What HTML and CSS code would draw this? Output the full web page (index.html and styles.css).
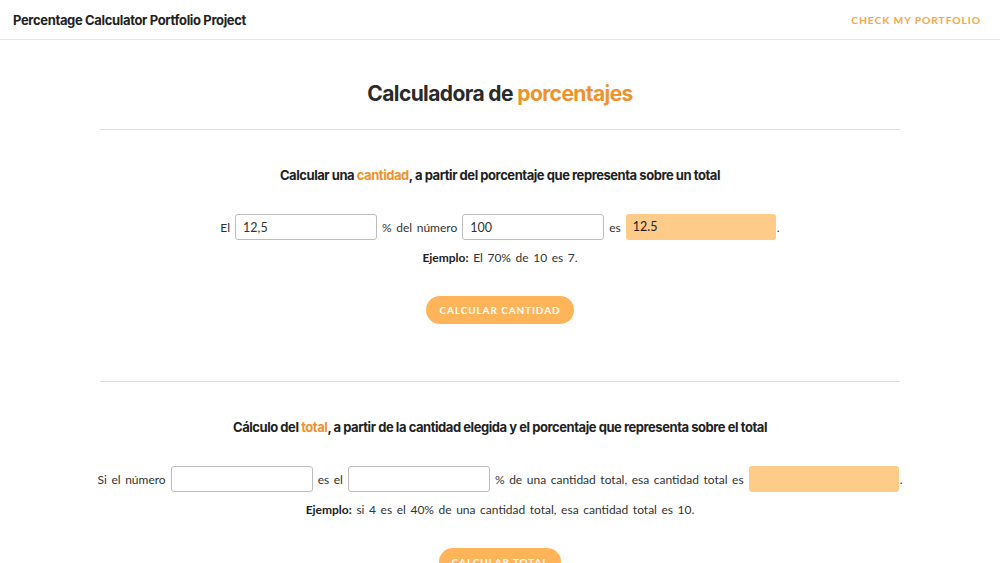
FILE: index.html
```html
<!DOCTYPE html>
<html lang="es">
<head>
<meta charset="utf-8">
<title>Calculadora de porcentajes</title>
<link rel="stylesheet" href="styles.css">
</head>
<body>
<header class="topbar">
  <div class="brand">Percentage Calculator Portfolio Project</div>
  <a class="portfolio-link" href="#">Check my portfolio</a>
</header>
<main class="container">
  <h1 class="page-title">Calculadora de <span class="accent">porcentajes</span></h1>
  <section class="calc">
    <h2 class="calc-title">Calcular una <span class="accent">cantidad</span>, a partir del porcentaje que representa sobre un total</h2>
    <div class="calc-row">
      <span>El</span>
      <input class="field" type="text" value="12,5">
      <span>% del número</span>
      <input class="field" type="text" value="100">
      <span>es</span>
      <div class="result">12.5</div>
      <span class="dot">.</span>
    </div>
    <p class="example"><strong>Ejemplo:</strong> El 70% de 10 es 7.</p>
    <button class="btn" type="button">Calcular cantidad</button>
  </section>
  <section class="calc">
    <h2 class="calc-title">Cálculo del <span class="accent">total</span>, a partir de la cantidad elegida y el porcentaje que representa sobre el total</h2>
    <div class="calc-row">
      <span>Si el número</span>
      <input class="field" type="text" value="">
      <span>es el</span>
      <input class="field" type="text" value="">
      <span>% de una cantidad total, esa cantidad total es</span>
      <div class="result"></div>
      <span class="dot">.</span>
    </div>
    <p class="example"><strong>Ejemplo:</strong> si 4 es el 40% de una cantidad total, esa cantidad total es 10.</p>
    <button class="btn" type="button">Calcular total</button>
  </section>
</main>
</body>
</html>
```
FILE: styles.css
```css
html, body {
  margin: 0;
  padding: 0;
  background: #fff;
}
body {
  font-family: Lato, "Open Sans", sans-serif;
  color: #333;
  font-size: 12px;
}
.topbar {
  height: 39px;
  border-bottom: 1px solid #e6e6e6;
  display: flex;
  align-items: center;
  justify-content: space-between;
  padding: 0 19px 0 13px;
}
.brand {
  font-family: Inter, "Liberation Sans", sans-serif;
  font-weight: 700;
  font-size: 13px;
  letter-spacing: -0.35px;
  color: #222;
}
.portfolio-link {
  font-family: Lato, sans-serif;
  font-weight: 700;
  font-size: 10.3px;
  letter-spacing: 0.9px;
  text-transform: uppercase;
  color: #f5a54a;
  text-decoration: none;
}
.container {
  width: 800px;
  margin: 0 auto;
}
.accent {
  color: #f0922c;
}
.page-title {
  font-family: Inter, "Liberation Sans", sans-serif;
  font-weight: 700;
  font-size: 21px;
  letter-spacing: -0.6px;
  color: #2a2a2a;
  text-align: center;
  margin: 0;
  padding: 41px 0 22px;
  line-height: 26px;
  border-bottom: 1px solid #ddd;
}
.calc {
  text-align: center;
  padding: 36px 0 57px;
  border-bottom: 1px solid #ddd;
}
.calc-title {
  font-family: Inter, "Liberation Sans", sans-serif;
  font-weight: 700;
  font-size: 13px;
  letter-spacing: -0.45px;
  color: #222;
  margin: 0 0 30px;
  line-height: 18px;
}
.calc-row {
  display: flex;
  justify-content: center;
  align-items: center;
  gap: 5px;
  white-space: nowrap;
  word-spacing: 1.5px;
}
.calc-row > * {
  flex-shrink: 0;
}
.field {
  width: 142px;
  height: 26px;
  box-sizing: border-box;
  border: 1px solid #bdbdbd;
  border-radius: 3px;
  padding: 0 7px;
  font-family: Lato, sans-serif;
  font-size: 12.5px;
  color: #333;
  background: #fff;
}
.result {
  width: 150px;
  height: 26px;
  box-sizing: border-box;
  background: #ffcb89;
  border-radius: 3px;
  padding: 0 7px;
  text-align: left;
  line-height: 26px;
  font-size: 12.5px;
  color: #222;
}
.dot {
  margin-left: -4px;
}
.example {
  margin: 10px 0 30px;
  line-height: 16px;
  word-spacing: 1.5px;
}
.example strong {
  font-weight: 700;
  color: #222;
}
.btn {
  font-family: Lato, sans-serif;
  font-weight: 700;
  font-size: 10px;
  letter-spacing: 0.9px;
  word-spacing: 0;
  text-transform: uppercase;
  color: #fff;
  background: #ffb45a;
  border: none;
  border-radius: 14px;
  height: 28px;
  padding: 0 13px;
  cursor: pointer;
}
```
